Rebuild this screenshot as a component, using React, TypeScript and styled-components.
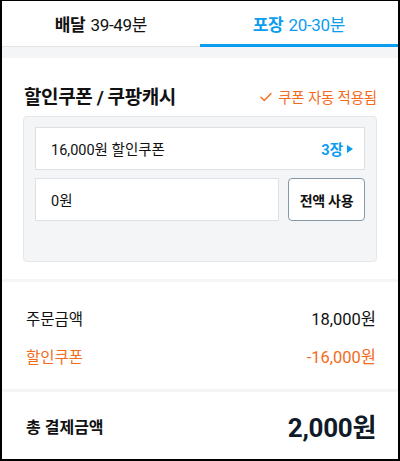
import React from "react";
import styled, { createGlobalStyle } from "styled-components";

const GlobalStyle = createGlobalStyle`
    html, body {
        margin: 0;
        padding: 0;
        background: #fff;
    }
    * {
        box-sizing: border-box;
    }
    body {
        font-family: Roboto, "Noto Sans CJK KR", "Noto Sans", sans-serif;
        color: #111;
    }
`;

const Frame = styled.div`
    width: 400px;
    height: 461px;
    border: 2px solid #000;
    border-top-width: 1px;
    overflow: hidden;
    display: flex;
    flex-direction: column;
    background: #fff;
`;

const Tabs = styled.div`
    display: flex;
    height: 46px;
    flex-shrink: 0;
`;

const Tab = styled.div<{ $active?: boolean }>`
    flex: 1;
    display: flex;
    align-items: center;
    justify-content: center;
    font-size: 17px;
    letter-spacing: -0.3px;
    color: ${(p) => (p.$active ? "#0a9df0" : "#111")};
    border-bottom: ${(p) => (p.$active ? "3px solid #0a9df0" : "1px solid #e2e4e8")};
    padding-top: ${(p) => (p.$active ? "2px" : "0")};
    b {
        font-weight: 700;
        margin-right: 5px;
    }
`;

const Gap = styled.div<{ $h: number }>`
    height: ${(p) => p.$h}px;
    background: #f4f5f7;
    flex-shrink: 0;
`;

const Section = styled.div`
    padding: 18px 21px 17px 21px;
`;

const TitleRow = styled.div`
    display: flex;
    align-items: center;
    justify-content: space-between;
    height: 38px;
    padding: 0 0 0 1px;
    margin-bottom: 2px;
`;

const Title = styled.div`
    font-size: 19px;
    font-weight: 700;
    letter-spacing: -0.4px;
    color: #111;
`;

const AutoApplied = styled.div`
    display: flex;
    align-items: center;
    gap: 6px;
    font-size: 14.5px;
    color: #f36b1c;
    letter-spacing: -0.2px;
    padding-top: 3px;
`;

const Box = styled.div`
    background: #f4f5f7;
    border: 1px solid #e5e7ea;
    border-radius: 4px;
    padding: 10px 11px 40px 11px;
    display: flex;
    flex-direction: column;
    gap: 8px;
`;

const CouponRow = styled.div`
    height: 43px;
    background: #fff;
    border: 1px solid #dde0e4;
    display: flex;
    align-items: center;
    justify-content: space-between;
    padding: 0 11px 0 15px;
    font-size: 14.5px;
    color: #111;
`;

const Count = styled.div`
    display: flex;
    align-items: center;
    gap: 4px;
    color: #0a9df0;
    font-weight: 700;
    font-size: 14.5px;
`;

const CashRow = styled.div`
    display: flex;
    gap: 9px;
    height: 43px;
`;

const CashInput = styled.div`
    flex: 1;
    background: #fff;
    border: 1px solid #dde0e4;
    display: flex;
    align-items: center;
    padding: 0 15px;
    font-size: 14.5px;
    color: #111;
`;

const UseAllButton = styled.button`
    width: 77px;
    height: 43px;
    background: #fff;
    border: 1px solid #8797a6;
    border-radius: 4px;
    font-family: inherit;
    font-size: 14px;
    font-weight: 700;
    color: #111;
    padding: 0;
    letter-spacing: -0.3px;
`;

const Summary = styled.div`
    padding: 17px 22px 14px 24px;
    display: flex;
    flex-direction: column;
`;

const SummaryRow = styled.div<{ $accent?: boolean }>`
    display: flex;
    justify-content: space-between;
    align-items: center;
    height: 38px;
    font-size: 15.5px;
    color: ${(p) => (p.$accent ? "#f36b1c" : "#111")};
`;

const Amount = styled.span`
    font-size: 16.5px;
`;

const Total = styled.div`
    flex: 1;
    display: flex;
    justify-content: space-between;
    align-items: center;
    padding: 0 22px 0 24px;
`;

const TotalLabel = styled.div`
    font-size: 16px;
    font-weight: 700;
    color: #111;
`;

const TotalValue = styled.div`
    font-size: 26px;
    font-weight: 700;
    color: #111a27;
    letter-spacing: -0.3px;
`;

function Check() {
    return (
        <svg width="12" height="10" viewBox="0 0 12 10" fill="none">
            <path d="M1 5.2 L4.3 8.4 L11 1.4" stroke="#f36b1c" strokeWidth="1.4" strokeLinecap="round" strokeLinejoin="round" />
        </svg>
    );
}

function Caret() {
    return (
        <svg width="6" height="8" viewBox="0 0 6 8">
            <path d="M0 0 L6 4 L0 8 Z" fill="#0a9df0" />
        </svg>
    );
}

export default function App() {
    return (
        <>
            <GlobalStyle />
            <Frame>
                <Tabs>
                    <Tab><b>배달</b>39-49분</Tab>
                    <Tab $active><b>포장</b>20-30분</Tab>
                </Tabs>
                <Gap $h={11} />
                <Section>
                    <TitleRow>
                        <Title>할인쿠폰 / 쿠팡캐시</Title>
                        <AutoApplied>
                            <Check />
                            쿠폰 자동 적용됨
                        </AutoApplied>
                    </TitleRow>
                    <Box>
                        <CouponRow>
                            <span>16,000원 할인쿠폰</span>
                            <Count>
                                3장
                                <Caret />
                            </Count>
                        </CouponRow>
                        <CashRow>
                            <CashInput>0원</CashInput>
                            <UseAllButton>전액 사용</UseAllButton>
                        </CashRow>
                    </Box>
                </Section>
                <Gap $h={3} />
                <Summary>
                    <SummaryRow>
                        <span>주문금액</span>
                        <Amount>18,000원</Amount>
                    </SummaryRow>
                    <SummaryRow $accent>
                        <span>할인쿠폰</span>
                        <Amount>-16,000원</Amount>
                    </SummaryRow>
                </Summary>
                <Gap $h={3} />
                <Total>
                    <TotalLabel>총 결제금액</TotalLabel>
                    <TotalValue>2,000원</TotalValue>
                </Total>
            </Frame>
        </>
    );
}
